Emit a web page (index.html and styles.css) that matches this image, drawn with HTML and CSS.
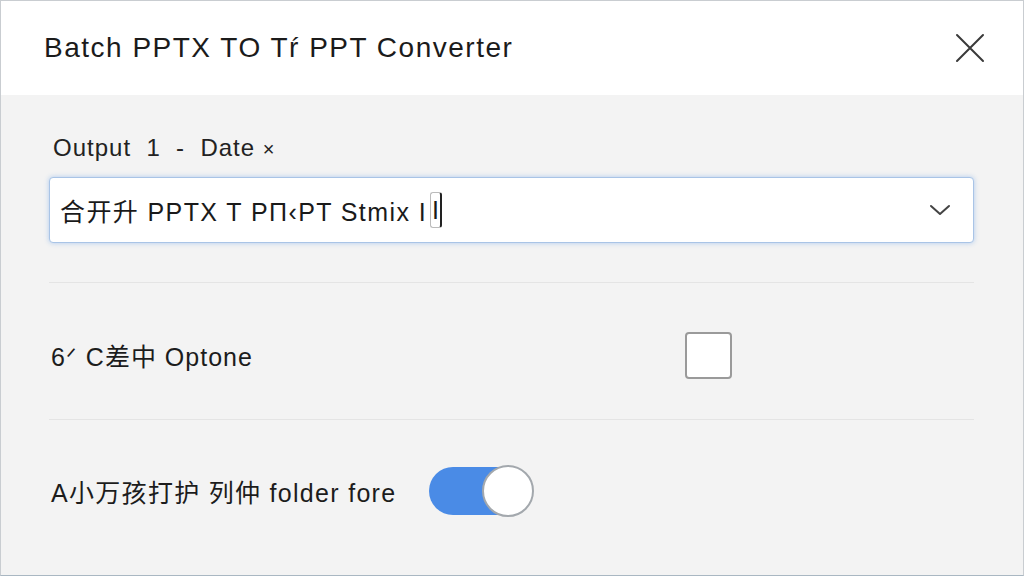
FILE: index.html
```html
<!DOCTYPE html>
<html lang="zh">
<head>
<meta charset="utf-8">
<title>Batch PPTX TO PPT Converter</title>
<link rel="stylesheet" href="styles.css">
</head>
<body>
<div class="window">
  <header class="header">
    <h1 class="title">Batch PPTX TO Tŕ PPT Converter</h1>
    <button class="close" aria-label="Close">
      <svg width="30" height="30" viewBox="0 0 30 30"><path d="M2 2 L28 28 M28 2 L2 28" stroke="#3a3a3a" stroke-width="2" fill="none" stroke-linecap="round"/></svg>
    </button>
  </header>
  <main class="content">
    <div class="field-label">Output&nbsp; 1&nbsp; -&nbsp; Date <span class="times">×</span></div>
    <div class="select">
      <span class="select-text">合开升 PPTX T PΠ‹PT Stmix I<span class="caret">I</span></span>
      <svg class="chevron" width="22" height="14" viewBox="0 0 22 14"><path d="M2 3 L11 11 L20 3" stroke="#444" stroke-width="2" fill="none" stroke-linecap="round" stroke-linejoin="round"/></svg>
    </div>
    <div class="divider"></div>
    <div class="row row-check">
      <span class="row-label">6ᐟ C差中 Optone</span>
      <span class="checkbox"></span>
    </div>
    <div class="divider"></div>
    <div class="row row-toggle">
      <span class="row-label">A小万孩打护 列仲 folder fore</span>
      <span class="toggle"><span class="knob"></span></span>
    </div>
  </main>
</div>
</body>
</html>
```
FILE: styles.css
```css
html, body {
  margin: 0;
  padding: 0;
}
body {
  font-family: "Liberation Sans", Arial, "Noto Sans CJK SC", sans-serif;
  background: #f3f3f3;
  color: #1a1a1a;
}
.window {
  width: 1024px;
  height: 576px;
  box-sizing: border-box;
  border: 1px solid #c9cdd1;
  border-bottom-color: #a9b7c2;
  background: #f3f3f3;
  overflow: hidden;
}
.header {
  height: 94px;
  background: #ffffff;
  display: flex;
  align-items: center;
  justify-content: space-between;
  padding: 0 38px 0 43px;
}
.title {
  margin: 0;
  font-size: 28px;
  font-weight: normal;
  color: #1b1b1b;
  letter-spacing: 1.5px;
}
.close {
  border: none;
  background: transparent;
  padding: 0;
  width: 30px;
  height: 30px;
  display: flex;
}
.content {
  padding: 40px 49px 0 48px;
}
.field-label {
  font-size: 24px;
  line-height: 26px;
  letter-spacing: 1px;
  color: #222;
  padding-left: 4px;
}
.times {
  font-size: 20px;
}
.select {
  margin-top: 15px;
  height: 64px;
  background: #fff;
  border: 1.5px solid #a9c4e6;
  border-radius: 4px;
  box-shadow: 0 0 5px rgba(90, 150, 230, 0.45);
  display: flex;
  align-items: center;
  justify-content: space-between;
  padding: 0 22px 0 10px;
}
.select-text {
  font-size: 25px;
  letter-spacing: 1.4px;
  color: #1a1a1a;
  display: flex;
  align-items: center;
}
.caret {
  display: inline-block;
  margin-left: 3px;
  padding: 2px 1px;
  border: 1px solid #bbb;
  border-right: 2px solid #222;
  border-radius: 3px;
  line-height: 30px;
  letter-spacing: 0;
}
.divider {
  margin-top: 39px;
  height: 1px;
  background: #e4e4e4;
}
.row {
  display: flex;
  align-items: center;
  box-sizing: border-box;
}
.row + .divider {
  margin-top: 0;
}
.row-check {
  height: 136px;
  padding-top: 8px;
}
.row-toggle {
  height: 142px;
}
.row-label {
  font-size: 25px;
  letter-spacing: 1px;
  color: #1c1c1c;
  padding-left: 2px;
}
.row-check .row-label {
  width: 634px;
}
.checkbox {
  width: 43px;
  height: 43px;
  background: #fff;
  border: 2px solid #9a9a9a;
  border-radius: 4px;
}
.row-toggle .row-label {
  letter-spacing: 1.3px;
  margin-right: 33px;
}
.toggle {
  position: relative;
  width: 104px;
  height: 48px;
  background: #4a8be6;
  border-radius: 24px;
}
.knob {
  position: absolute;
  right: -1px;
  top: -2px;
  width: 48px;
  height: 48px;
  background: #fff;
  border: 2px solid #a3a8ad;
  border-radius: 50%;
}
```
